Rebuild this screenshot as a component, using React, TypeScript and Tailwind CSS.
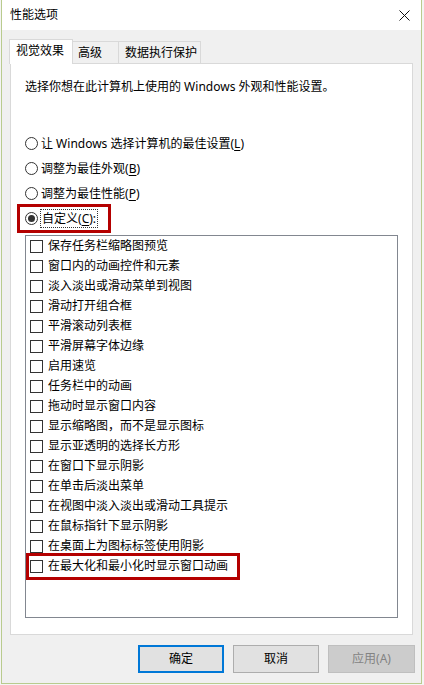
const items = [
  "保存任务栏缩略图预览",
  "窗口内的动画控件和元素",
  "淡入淡出或滑动菜单到视图",
  "滑动打开组合框",
  "平滑滚动列表框",
  "平滑屏幕字体边缘",
  "启用速览",
  "任务栏中的动画",
  "拖动时显示窗口内容",
  "显示缩略图，而不是显示图标",
  "显示亚透明的选择长方形",
  "在窗口下显示阴影",
  "在单击后淡出菜单",
  "在视图中淡入淡出或滑动工具提示",
  "在鼠标指针下显示阴影",
  "在桌面上为图标标签使用阴影",
  "在最大化和最小化时显示窗口动画",
];

const radios = [
  { label: "让 Windows 选择计算机的最佳设置", key: "L" },
  { label: "调整为最佳外观", key: "B" },
  { label: "调整为最佳性能", key: "P" },
  { label: "自定义", key: "C", suffix: ":", checked: true },
];

function Radio({ checked }: { checked?: boolean }) {
  return (
    <span className="w-[13px] h-[13px] rounded-full border border-[#333333] bg-white flex items-center justify-center shrink-0">
      {checked && <span className="w-[7px] h-[7px] rounded-full bg-[#333333]" />}
    </span>
  );
}

function Box() {
  return <span className="w-[13px] h-[13px] border border-[#333333] bg-white shrink-0" />;
}

export default function App() {
  return (
    <div className="w-[424px] h-[685px] bg-[#f4f4f4] flex font-['Noto_Sans','Noto_Sans_CJK_SC',sans-serif] text-[12px] text-black overflow-hidden">
      <div className="ml-[1px] w-[421px] h-[684px] border-x border-b border-[#b9cb8e] flex flex-col">
        {/* title bar */}
        <div className="h-[30px] bg-white flex items-center justify-between pl-[8px] pr-[10px] shrink-0">
          <span className="text-[12px] leading-none">性能选项</span>
          <svg width="11" height="11" viewBox="0 0 11 11" className="mr-[1px]">
            <path d="M0.5 0.5 L10.5 10.5 M10.5 0.5 L0.5 10.5" stroke="#111" strokeWidth="1" />
          </svg>
        </div>

        <div className="flex-1 bg-[#f0f0f0] px-[8px] pt-[9px] flex flex-col">
          {/* tabs */}
          <div className="flex items-end h-[24px]">
            <div className="-ml-px w-[64px] h-[25px] -mb-px bg-white border-t border-x border-[#d9d9d9] relative z-10 flex items-center pl-[6px] pb-[2px]">
              视觉效果
            </div>
            <div className="w-[46px] h-[22px] border-t border-r border-[#d9d9d9] flex items-center pl-[5px]">
              高级
            </div>
            <div className="w-[82px] h-[22px] border-t border-r border-[#d9d9d9] flex items-center pl-[6px]">
              数据执行保护
            </div>
          </div>

          {/* panel */}
          <div className="w-[403px] h-[572px] bg-white border border-[#d9d9d9] pl-[14px] flex flex-col">
            <div className="mt-[13px] h-[20px] leading-[20px]">
              选择你想在此计算机上使用的 Windows 外观和性能设置。
            </div>

            <div className="mt-[34px] flex flex-col">
              {radios.map((r) => (
                <div key={r.key} className="h-[25px] flex items-center gap-[3px] relative">
                  <Radio checked={r.checked} />
                  <span
                    className={
                      r.checked
                        ? "leading-[17px] px-px outline-1 outline-dotted outline-[#333333]"
                        : "leading-[17px]"
                    }
                  >
                    {r.label}(<span className="underline underline-offset-2">{r.key}</span>){r.suffix}
                  </span>
                  {r.checked && (
                    <span className="absolute -left-[8px] -top-[2px] w-[94px] h-[29px] border-[3px] border-[#b40000]" />
                  )}
                </div>
              ))}
            </div>

            <div className="mt-[4px] w-[373px] h-[383px] border border-[#828790] pl-[4px] flex flex-col">
              {items.map((t, i) => (
                <div key={t} className="h-[20px] flex items-center gap-[5px] relative shrink-0">
                  <Box />
                  <span className="leading-[20px]">{t}</span>
                  {i === items.length - 1 && (
                    <span className="absolute -left-[4px] -top-[3px] w-[214px] h-[27px] border-[3px] border-[#b40000]" />
                  )}
                </div>
              ))}
            </div>
          </div>

          {/* buttons */}
          <div className="mt-[10px] -mr-[2px] flex justify-end gap-[9px]">
            <button className="w-[86px] h-[28px] bg-[#e1e1e1] border-2 border-[#0078d7] text-[12px]">确定</button>
            <button className="w-[86px] h-[28px] bg-[#e1e1e1] border border-[#adadad] text-[12px]">取消</button>
            <button className="w-[87px] h-[28px] bg-[#cccccc] border border-[#bfbfbf] text-[#838383] text-[12px]">应用(A)</button>
          </div>
        </div>
      </div>
    </div>
  );
}
